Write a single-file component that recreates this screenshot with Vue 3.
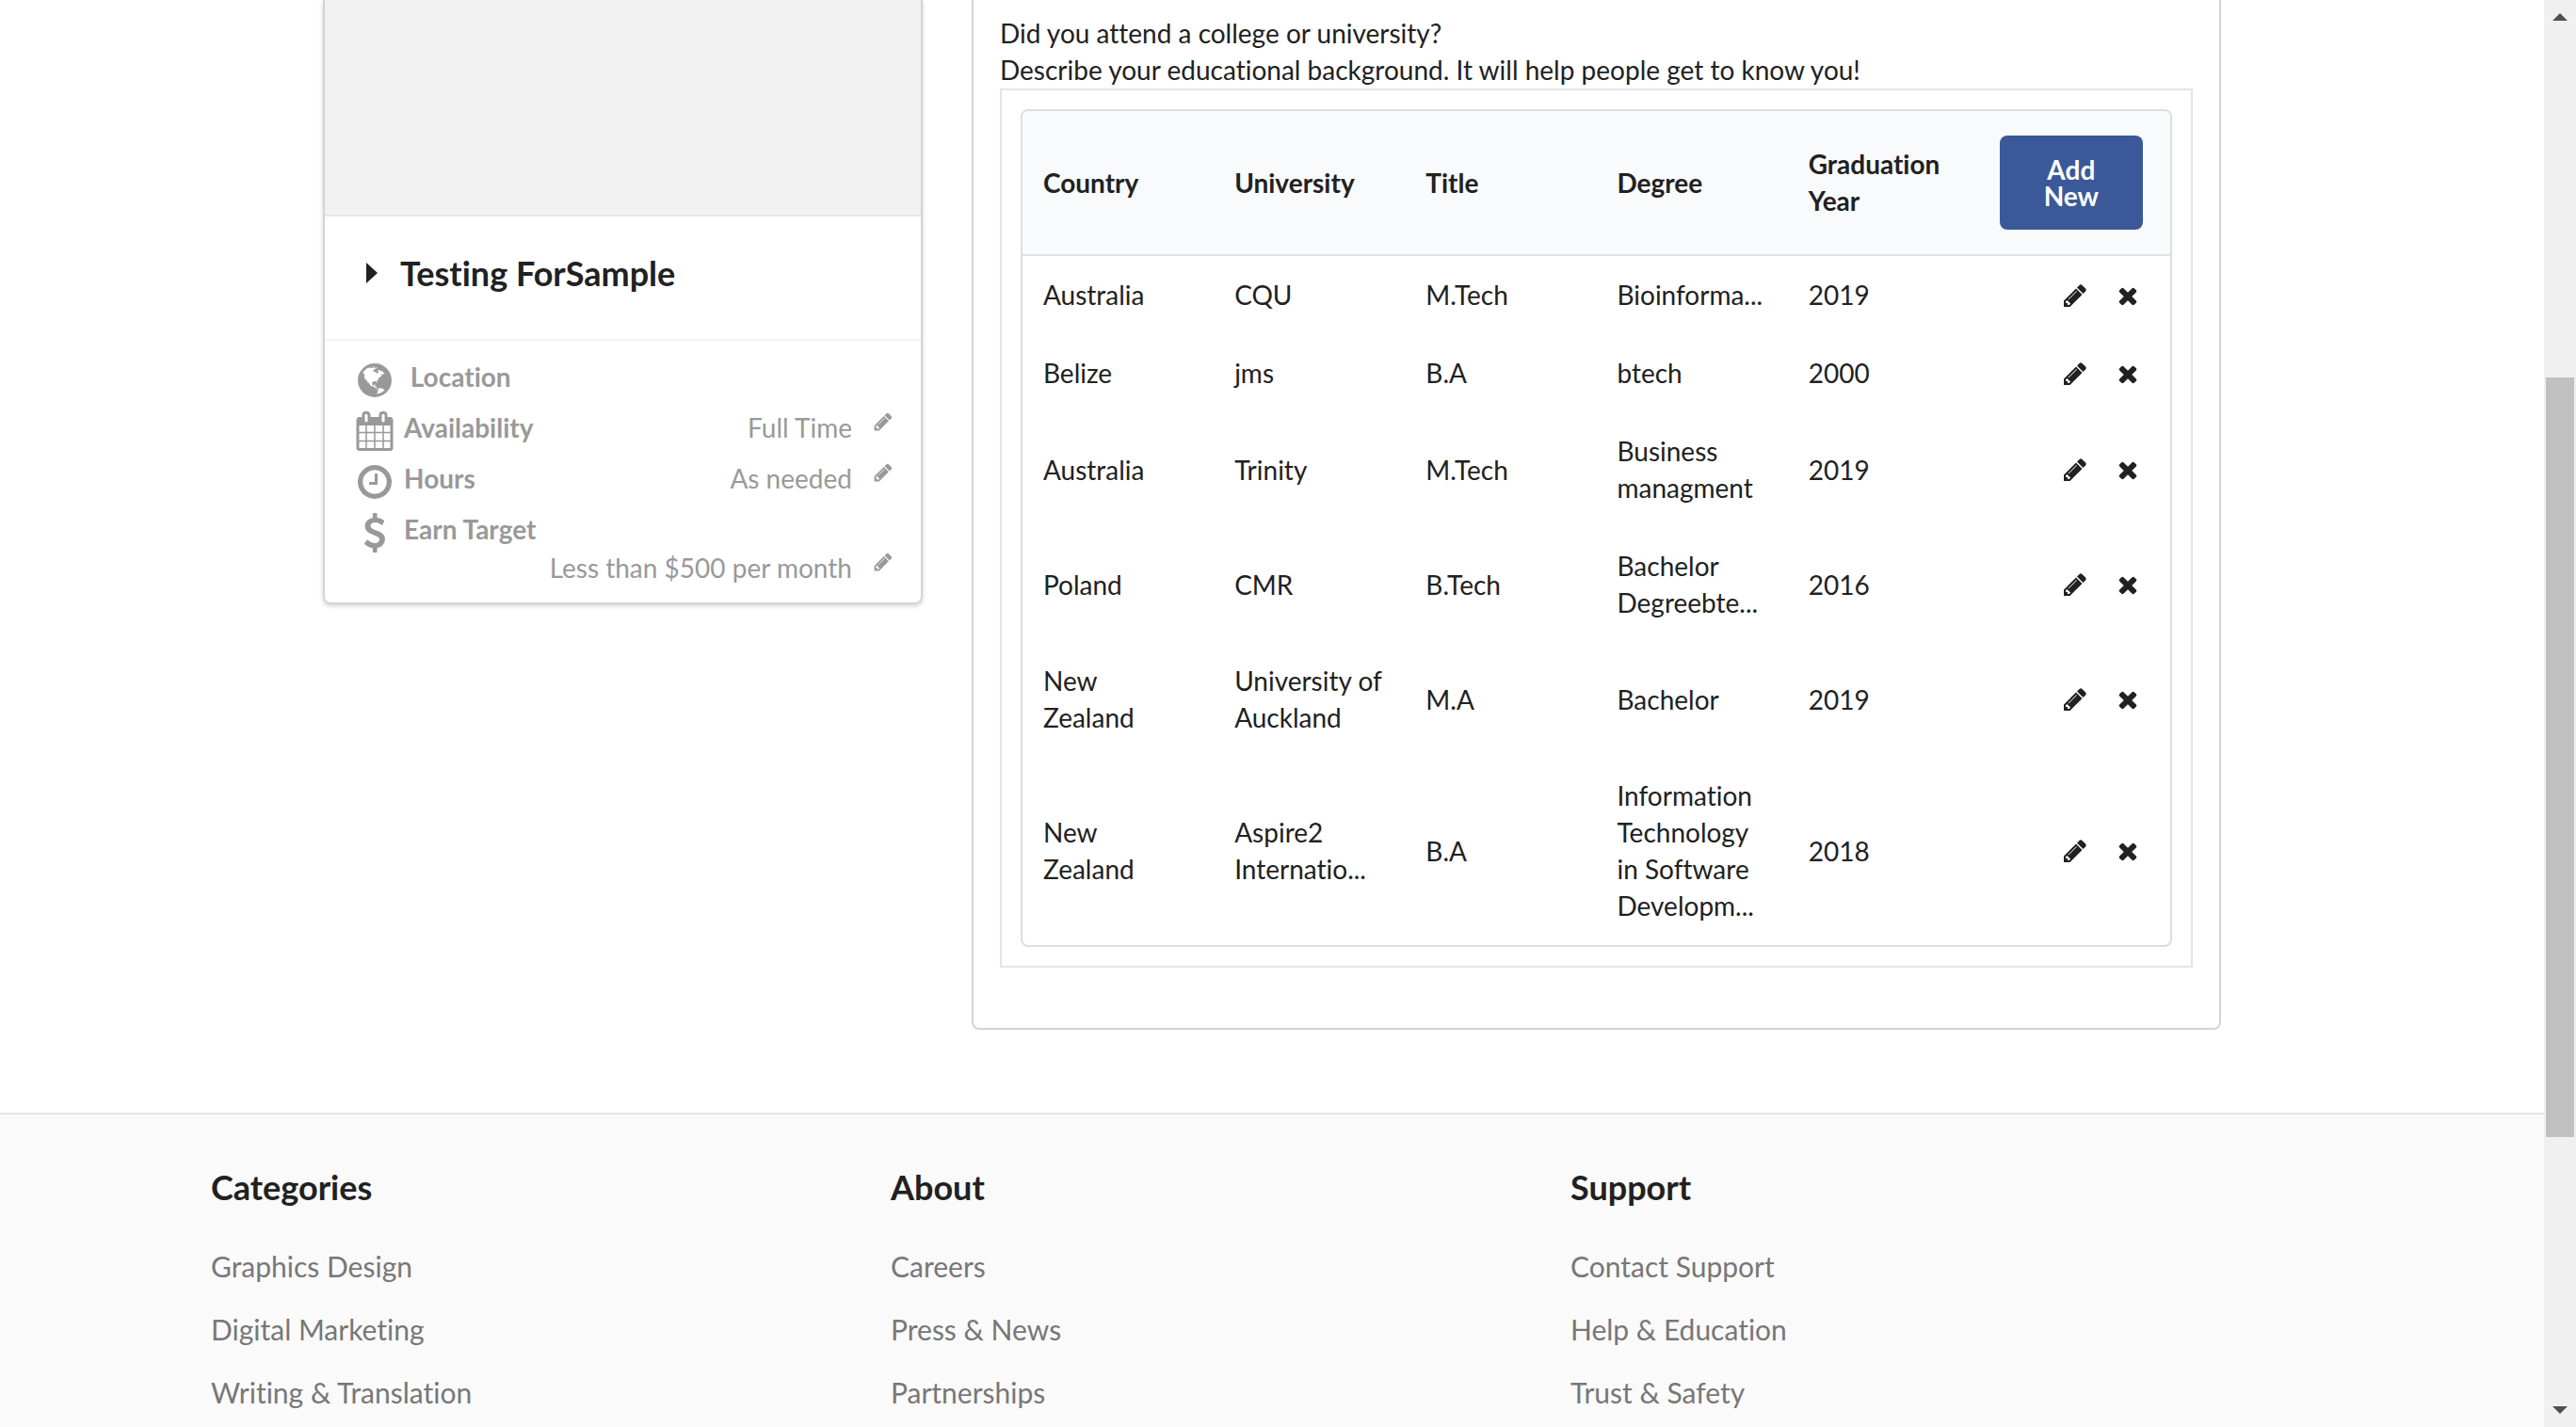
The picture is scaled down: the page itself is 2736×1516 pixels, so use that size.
<script setup>
const icons = {
  pencil: 'M491 1536l91-91-235-235-91 91v107h128v128h107zm523-928q0-22-22-22-10 0-17 7l-542 542q-7 7-7 17 0 22 22 22 10 0 17-7l542-542q7-7 7-17zm-54-192l416 416-832 832h-416v-416zm683 96q0 53-37 90l-166 166-416-416 166-165q36-38 90-38 53 0 91 38l235 234q37 39 37 91z',
  close: 'M1490 1322q0 40-28 68l-136 136q-28 28-68 28t-68-28l-294-294-294 294q-28 28-68 28t-68-28l-136-136q-28-28-28-68t28-68l294-294-294-294q-28-28-28-68t28-68l136-136q28-28 68-28t68 28l294 294 294-294q28-28 68-28t68 28l136 136q28 28 28 68t-28 68l-294 294 294 294q28 28 28 68z',
  calendar: 'M192 1664h288v-288h-288v288zm352 0h320v-288h-320v288zm-352-352h288v-320h-288v320zm352 0h320v-320h-320v320zm-352-384h288v-288h-288v288zm736 736h320v-288h-320v288zm-384-736h320v-288h-320v288zm768 736h288v-288h-288v288zm-384-352h320v-320h-320v320zm-352-864v-288q0-13-9.5-22.5t-22.5-9.5h-64q-13 0-22.5 9.5t-9.5 22.5v288q0 13 9.5 22.5t22.5 9.5h64q13 0 22.5-9.5t9.5-22.5zm736 864h288v-320h-288v320zm-384-384h320v-288h-320v288zm384 0h288v-288h-288v288zm32-480v-288q0-13-9.5-22.5t-22.5-9.5h-64q-13 0-22.5 9.5t-9.5 22.5v288q0 13 9.5 22.5t22.5 9.5h64q13 0 22.5-9.5t9.5-22.5zm384-64v1280q0 52-38 90t-90 38h-1408q-52 0-90-38t-38-90v-1280q0-52 38-90t90-38h128v-96q0-66 47-113t113-47h64q66 0 113 47t47 113v96h384v-96q0-66 47-113t113-47h64q66 0 113 47t47 113v96h128q52 0 90 38t38 90z',
  clock: 'M1024 544v448q0 14-9 23t-23 9h-320q-14 0-23-9t-9-23v-64q0-14 9-23t23-9h224v-352q0-14 9-23t23-9h64q14 0 23 9t9 23zm416 352q0-148-73-273t-198-198-273-73-273 73-198 198-73 273 73 273 198 198 273 73 273-73 198-198 73-273zm224 0q0 209-103 385.5t-279.5 279.5-385.5 103-385.5-103-279.5-279.5-103-385.5 103-385.5 279.5-279.5 385.5-103 385.5 103 279.5 279.5 103 385.5z',
  dollar: 'M1362 1185q0 153-99.5 263.5t-258.5 136.5v175q0 14-9 23t-23 9h-135q-13 0-22.5-9.5t-9.5-22.5v-175q-66-9-127.5-31t-101.5-44.5-74-48-46.5-37.5-17.5-18q-17-21-2-41l103-135q7-10 23-12 15-2 24 9l2 2q113 99 243 125 37 8 74 8 81 0 142.5-43t61.5-122q0-28-15-53t-33.5-42-58.5-37.5-66-32-80-32.5q-39-16-61.5-25t-61.5-26.5-62.5-31-56.5-35.5-53.5-42.5-43.5-49-35.5-58-21-66.5-8.5-78q0-138 98-242t255-134v-180q0-13 9.5-22.5t22.5-9.5h135q14 0 23 9t9 23v176q57 6 110.5 23t87 33.5 63.5 37.5 39 29 15 14q17 18 5 38l-81 146q-8 15-23 16-14 3-27-7-3-3-14.5-12t-39-26.5-58.5-32-74.5-26-85.5-11.5q-95 0-155 43t-60 111q0 26 8.5 48t29.5 41.5 39.5 33 56 31 60.5 27 70 27.5q53 20 81 31.5t76 35 75.5 42.5 62 50 53 63.5 31.5 76.5 13 94z',
  globe: 'M896 128q209 0 385.5 103t279.5 279.5 103 385.5-103 385.5-279.5 279.5-385.5 103-385.5-103-279.5-279.5-103-385.5 103-385.5 279.5-279.5 385.5-103zm274 521q-2 1-9.5 9.5t-13.5 9.5q2 0 4.5-5t5-11 3.5-7q6-7 22-15 14-6 52-12 34-8 51 11-2-2 9.5-13t14.5-12q3-2 15-4.5t15-7.5l2-22q-12 1-17.5-7t-6.5-21q0 2-6 8 0-7-4.5-8t-11.5 1-9 1q-10-3-15-7.5t-8-16.5-4-15q-2-5-9.5-11t-9.5-10q-1-2-2.5-5.5t-3-6.5-4-5.5-5.5-2.5-7 5-7.5 10-4.5 5q-3-2-6-1.5t-4.5 1-4.5 3-5 3.5q-3 2-8.5 3t-8.5 2q15-5-1-11-10-4-16-3 9-4 7.5-12t-8.5-14h5q-1-4-8.5-8.5t-17.5-8.5-13-6q-8-5-34-9.5t-33-.5q-5 6-4.5 10.5t4 14 3.5 12.5q1 6-5.5 13t-6.5 12q0 7 14 15.5t10 21.5q-3 8-16 16t-16 12q-5 8-1.5 18.5t10.5 16.5q2 2 1.5 4t-3.5 4.5-5.5 4-6.5 3.5l-3 2q-11 5-20.5-6t-13.5-26q-7-25-16-30-23-8-29 1-5-13-41-26-25-9-58-4 6-1 0-15-7-15-19-12 3-6 4-17.5t1-13.5q3-13 12-23 1-1 7-8.5t9.5-13.5.5-6q35 4 50-11 5-5 11.5-17t10.5-17q9-6 14-5.5t14.5 5.5 14.5 5q14 1 15.5-11t-7.5-20q12 1 3-17-4-7-8-9-12-4-27 5-8 4 2 8-1-1-9.5 10.5t-16.5 17.5-16-5q-1-1-5.5-13.5t-9.5-13.5q-8 0-16 15 3-8-11-15t-24-8q19-12-8-27-7-4-20.5-5t-19.5 4q-5 7-5.5 11.5t5 8 10.5 5.5 11.5 4 8.5 3q14 10 8 14-2 1-8.5 3.5t-11.5 4.5-6 4q-3 4 0 14t-2 14q-5-5-9-17.5t-7-16.5q7 9-25 6l-10-1q-4 0-16 2t-20.5 1-13.5-8q-4-8 0-20 1-4 4-2-4-3-11-9.5t-10-8.5q-46 15-94 41 6 1 12-1 5-2 13-6.5t10-5.5q34-14 42-7l5-5q14 16 20 25-7-4-30-1-20 6-22 12 7 12 5 18-4-3-11.5-10t-14.5-11-15-5q-16 0-22 1-146 80-235 222 7 7 12 8 4 1 5 9t2.5 11 11.5-3q9 8 3 19 1-1 44 27 19 17 21 21 3 11-10 18-1-2-9-9t-9-4q-3 5 .5 18.5t10.5 12.5q-7 0-9.5 16t-2.5 35.5-1 23.5l2 1q-3 12 5.5 34.5t21.5 19.5q-13 3 20 43 6 8 8 9 3 2 12 7.5t15 10 10 10.5q4 5 10 22.5t14 23.5q-2 6 9.5 20t10.5 23q-1 0-2.5 1t-2.5 1q3 7 15.5 14t15.5 13q1 3 2 10t3 11 8 2q2-20-24-62-15-25-17-29-3-5-5.5-15.5t-4.5-14.5q2 0 6 1.5t8.5 3.5 7.5 4 2 3q-3 7 2 17.5t12 18.5 17 19 12 13q6 6 14 19.5t0 13.5q9 0 20 10.5t17 19.5q5 8 8 26t5 24q2 7 8.5 13.5t12.5 9.5l16 8 13 7q5 2 18.5 10.5t21.5 11.5q10 4 16 4t14.5-2.5 13.5-3.5q15-2 29 15t21 21q36 19 55 11-2 1 .5 7.5t8 15.5 9 14.5 5.5 8.5q5 6 18 15t18 15q6-4 7-9-3 8 7 20t18 10q14-3 14-32-31 15-49-18 0-1-2.5-5.5t-4-8.5-2.5-8.5 0-7.5 5-3q9 0 10-3.5t-2-12.5-4-13q-1-8-11-20t-12-15q-5 9-16 8t-16-9q0 1-1.5 5.5t-1.5 6.5q-13 0-15-1 1-3 2.5-17.5t3.5-22.5q1-4 5.5-12t7.5-14.5 4-12.5-4.5-9.5-17.5-2.5q-19 1-26 20-1 3-3 10.5t-5 11.5-9 7q-7 3-24 2t-24-5q-13-8-22.5-29t-9.5-37q0-10 2.5-26.5t3-25-5.5-24.5q3-2 9-9.5t10-10.5q2-1 4.5-1.5t4.5 0 4-1.5 3-6q-1-1-4-3-3-3-4-3 7 3 28.5-1.5t27.5 1.5q15 11 22-2 0-1-2.5-9.5t-.5-13.5q5 27 29 9 3 3 15.5 5t17.5 5q3 2 7 5.5t5.5 4.5 5-.5 8.5-6.5q10 14 12 24 11 40 19 44 7 3 11 2t4.5-9.5 0-14-1.5-12.5l-1-8v-18l-1-8q-15-3-18.5-12t1.5-18.5 15-18.5q1-1 8-3.5t15.5-6.5 12.5-8q21-19 15-35 7 0 11-9-1 0-5-3t-7.5-5-4.5-2q9-5 2-16 5-3 7.5-11t7.5-10q9 12 21 2 7-8 1-16 5-7 20.5-10.5t18.5-9.5q7 2 8-2t1-12 3-12q4-5 15-9t13-5l17-11q3-4 0-4 18 2 31-11 10-11-6-20 3-6-3-9.5t-15-5.5q3-1 11.5-.5t10.5-1.5q15-10-7-16-17-5-43 12zm-163 877q206-36 351-189-3-3-12.5-4.5t-12.5-3.5q-18-7-24-8 1-7-2.5-13t-8-9-12.5-8-11-7q-2-2-7-6t-7-5.5-7.5-4.5-8.5-2-10 1l-3 1q-3 1-5.5 2.5t-5.5 3-4 3 0 2.5q-21-17-36-22-5-1-11-5.5t-10.5-7-10-1.5-11.5 7q-5 5-6 15t-2 13q-7-5 0-17.5t2-18.5q-3-6-10.5-4.5t-12 4.5-11.5 8.5-9 6.5-8.5 5.5-8.5 7.5q-3 4-6 12t-5 11q-2-4-11.5-6.5t-9.5-5.5q2 10 4 35t5 38q7 31-12 48-27 25-29 40-4 22 12 26 0 7-8 20.5t-7 21.5q0 6 2 16z'
}

const details = [
  { icon: 'globe', label: '\u00a0Location' },
  { icon: 'calendar', label: 'Availability', value: 'Full Time' },
  { icon: 'clock', label: 'Hours', value: 'As needed' },
  { icon: 'dollar', label: 'Earn Target', value: 'Less than $500 per month', stacked: true }
]

const columns = ['Country', 'University', 'Title', 'Degree', 'Graduation Year']

const education = [
  ['Australia', 'CQU', 'M.Tech', 'Bioinforma...', '2019'],
  ['Belize', 'jms', 'B.A', 'btech', '2000'],
  ['Australia', 'Trinity', 'M.Tech', 'Business managment', '2019'],
  ['Poland', 'CMR', 'B.Tech', 'Bachelor Degreebte...', '2016'],
  ['New Zealand', 'University of Auckland', 'M.A', 'Bachelor', '2019'],
  ['New Zealand', 'Aspire2 Internatio...', 'B.A', 'Information Technology in Software Developm...', '2018']
]

const footer = [
  { title: 'Categories', links: ['Graphics Design', 'Digital Marketing', 'Writing & Translation'] },
  { title: 'About', links: ['Careers', 'Press & News', 'Partnerships'] },
  { title: 'Support', links: ['Contact Support', 'Help & Education', 'Trust & Safety'] }
]
</script>

<template>
  <div class="window">
    <div class="page">
      <main class="content">
        <aside class="card profile">
          <div class="photo"></div>
          <h2 class="name">
            <svg class="caret" viewBox="0 0 12 22" aria-hidden="true"><path d="M0 0L12 11L0 22z" /></svg>
            Testing ForSample
          </h2>
          <ul class="details">
            <li v-for="d in details" :key="d.icon" class="detail">
              <svg class="detail-icon" viewBox="0 0 1792 1792" aria-hidden="true"><path :d="icons[d.icon]" /></svg>
              <strong>{{ d.label }}</strong>
              <span v-if="d.value" class="value" :class="{ stacked: d.stacked }">
                {{ d.value }}
                <button type="button" class="icon-button" :aria-label="'Edit ' + d.label">
                  <svg class="small-icon" viewBox="0 0 1792 1792"><path :d="icons.pencil" /></svg>
                </button>
              </span>
            </li>
          </ul>
        </aside>

        <section class="card education">
          <p>Did you attend a college or university?</p>
          <p>Describe your educational background. It will help people get to know you!</p>
          <div class="segment">
            <table>
              <thead>
                <tr>
                  <th v-for="c in columns" :key="c" scope="col">{{ c }}</th>
                  <th><button type="button" class="add">Add New</button></th>
                </tr>
              </thead>
              <tbody>
                <tr v-for="(row, i) in education" :key="i">
                  <td v-for="(cell, j) in row" :key="j">{{ cell }}</td>
                  <td>
                    <div class="actions">
                      <button type="button" class="icon-button" aria-label="Edit">
                        <svg class="icon" viewBox="0 0 1792 1792"><path :d="icons.pencil" /></svg>
                      </button>
                      <button type="button" class="icon-button" aria-label="Delete">
                        <svg class="icon" viewBox="0 0 1792 1792"><path :d="icons.close" /></svg>
                      </button>
                    </div>
                  </td>
                </tr>
              </tbody>
            </table>
          </div>
        </section>
      </main>

      <footer class="footer">
        <nav v-for="group in footer" :key="group.title" :aria-label="group.title">
          <h3>{{ group.title }}</h3>
          <ul>
            <li v-for="link in group.links" :key="link"><a href="#">{{ link }}</a></li>
          </ul>
        </nav>
      </footer>
    </div>

    <div class="scrollbar" aria-hidden="true">
      <svg class="arrow" viewBox="0 0 34 34"><path d="M9 22L17 14L25 22z" /></svg>
      <div class="track">
        <div class="before"></div>
        <div class="thumb"></div>
        <div class="after"></div>
      </div>
      <svg class="arrow" viewBox="0 0 34 34"><path d="M9 12L17 20L25 12z" /></svg>
    </div>
  </div>
</template>

<style>
body {
  margin: 0;
  background: #fff;
}
</style>

<style scoped>
* {
  box-sizing: border-box;
}

.window {
  display: flex;
  height: 100vh;
  overflow: hidden;
  font-family: Lato, 'Liberation Sans', sans-serif;
  font-size: 28px;
  line-height: 39px;
  font-variant-ligatures: none;
  color: #212121;
}

.page {
  flex: 1;
  min-width: 0;
  display: flex;
  flex-direction: column;
}

.content {
  width: 100%;
  max-width: 2016px;
  margin: 0 auto 88px;
  display: grid;
  grid-template-columns: 12fr 25fr;
  gap: 52px;
  align-items: start;
}

.card {
  border: 2px solid #d4d4d5;
  border-top: 0;
  border-radius: 0 0 8px 8px;
}

.profile {
  box-shadow: 0 2px 4px #d4d4d5;
}

.photo {
  height: 230px;
  background: #f1f1f1;
  border-bottom: 2px solid #e5e5e5;
}

.name {
  display: flex;
  align-items: center;
  gap: 24px;
  margin: 0;
  padding: 39px 44px 49px;
  font-size: 36px;
  line-height: 42px;
  font-weight: 700;
}

.caret {
  width: 12px;
  height: 22px;
}

.details {
  margin: 0;
  padding: 19px 29px 17px 32px;
  border-top: 2px solid #f2f2f2;
  list-style: none;
  color: #999;
}

.detail {
  display: flex;
  flex-wrap: wrap;
  row-gap: 1px;
  margin-bottom: 14px;
}

.detail:last-child {
  margin-bottom: 0;
}

.detail-icon {
  width: 42px;
  height: 42px;
  margin: 2px 10px -4px 0;
}

.value {
  display: flex;
  justify-content: flex-end;
  align-items: flex-start;
  gap: 22px;
  margin-left: auto;
}

.stacked {
  flex-basis: 100%;
}

svg {
  display: block;
  flex: none;
  fill: currentColor;
}

.icon-button {
  padding: 0;
  border: 0;
  background: none;
  color: inherit;
  cursor: pointer;
}

.small-icon {
  width: 22px;
  height: 22px;
  margin-top: 2px;
}

.education {
  padding: 16px 28px 64px;
}

p {
  margin: 0;
}

.segment {
  padding: 20px;
  border: 2px solid #e4e4e4;
}

table {
  width: 100%;
  table-layout: fixed;
  border: 2px solid #dedede;
  border-radius: 8px;
  border-spacing: 0;
  overflow: hidden;
}

th {
  padding: 26px 22px;
  background: #f9fafb;
  border-bottom: 2px solid #e1e2e3;
  text-align: left;
  font-weight: 700;
}

td {
  padding: 22px;
}

.add {
  display: block;
  width: 152px;
  max-width: 100%;
  padding: 22px 40px;
  border: 0;
  border-radius: 8px;
  background: #3b5998;
  color: #fff;
  font: inherit;
  line-height: 28px;
  text-align: center;
  cursor: pointer;
}

.actions {
  display: flex;
  justify-content: flex-end;
  gap: 28px;
  padding-right: 9px;
}

.icon {
  width: 28px;
  height: 28px;
}

.footer {
  flex: 1 0 auto;
  display: grid;
  grid-template-columns: repeat(3, 1fr);
  padding: 56px 312px 0 224px;
  border-top: 2px solid #e3e3e4;
  background: #fafafa;
}

h3 {
  margin: 0;
  font-size: 36px;
  line-height: 42px;
}

.footer ul {
  margin: 30px 0 0;
  padding: 0;
  list-style: none;
  font-size: 30px;
  line-height: 67px;
}

a {
  color: #777;
  text-decoration: none;
}

.scrollbar {
  flex: none;
  width: 34px;
  display: flex;
  flex-direction: column;
  background: #f0f0f0;
  color: #505050;
}

.arrow {
  width: 34px;
  height: 34px;
}

.track {
  flex: 1;
  display: flex;
  flex-direction: column;
  padding: 0 2px;
}

.before {
  flex: 367;
}

.thumb {
  flex: 807;
  background: #c1c1c1;
}

.after {
  flex: 274;
}
</style>
